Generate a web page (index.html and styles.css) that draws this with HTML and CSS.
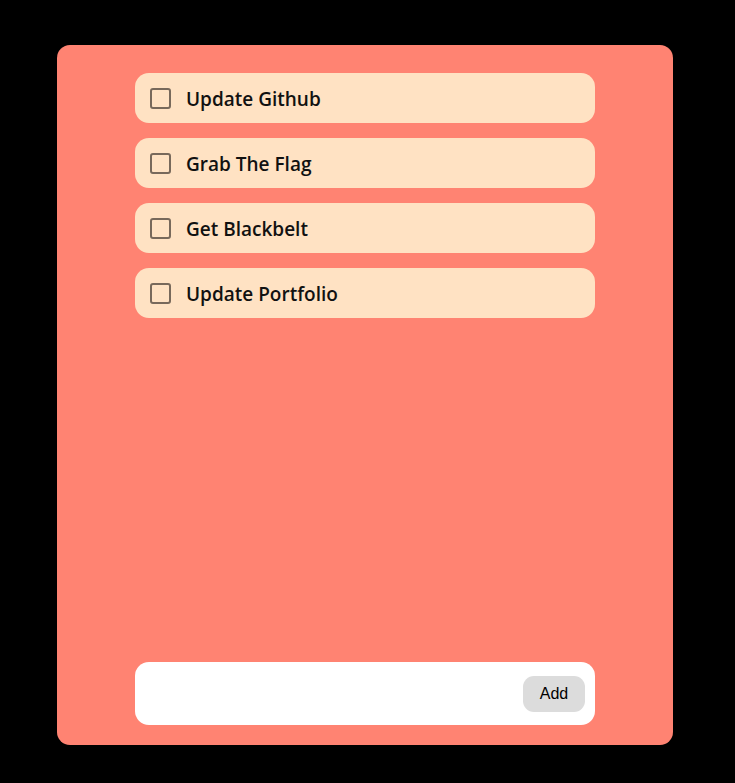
FILE: index.html
```html
<!DOCTYPE html>
<html>
<head>
<meta charset="utf-8">
<link rel="stylesheet" href="styles.css">
</head>
<body>
<main class="card">
  <ul class="list">
    <li class="item"><span class="box"></span><span class="label">Update Github</span></li>
    <li class="item"><span class="box"></span><span class="label">Grab The Flag</span></li>
    <li class="item"><span class="box"></span><span class="label">Get Blackbelt</span></li>
    <li class="item"><span class="box"></span><span class="label">Update Portfolio</span></li>
  </ul>
  <form class="add-form">
    <input class="field" type="text">
    <button class="add-btn" type="button">Add</button>
  </form>
</main>
</body>
</html>
```
FILE: styles.css
```css
html, body {
  margin: 0;
  padding: 0;
  background: #000;
}
body {
  padding-top: 45px;
  height: 783px;
  box-sizing: border-box;
}
.card {
  margin-left: 57px;
  width: 616px;
  height: 700px;
  box-sizing: border-box;
  background: #ff8372;
  border-radius: 13px;
  padding: 28px 78px 20px;
  display: flex;
  flex-direction: column;
  justify-content: space-between;
}
.list {
  list-style: none;
  margin: 0;
  padding: 0;
  display: flex;
  flex-direction: column;
  gap: 15px;
}
.item {
  height: 50px;
  background: #ffe2c3;
  border-radius: 14px;
  display: flex;
  align-items: center;
  padding-left: 15px;
  gap: 15px;
}
.box {
  width: 17px;
  height: 17px;
  border: 2.5px solid #78695b;
  border-radius: 3px;
}
.label {
  font-family: "Open Sans", "Noto Sans", sans-serif;
  font-weight: 600;
  font-size: 19px;
  color: #111;
  padding-top: 2px;
}
.add-form {
  height: 63px;
  background: #fff;
  border-radius: 14px;
  display: flex;
  align-items: center;
  padding-right: 10px;
  margin: 0;
}
.field {
  flex: 1;
  border: none;
  outline: none;
  background: transparent;
  height: 40px;
  margin-left: 12px;
}
.add-btn {
  width: 62px;
  height: 36px;
  border: none;
  border-radius: 11px;
  background: #dcdcdc;
  font-family: "Liberation Sans", Arial, sans-serif;
  font-size: 16px;
  color: #000;
  padding: 0;
}
```
